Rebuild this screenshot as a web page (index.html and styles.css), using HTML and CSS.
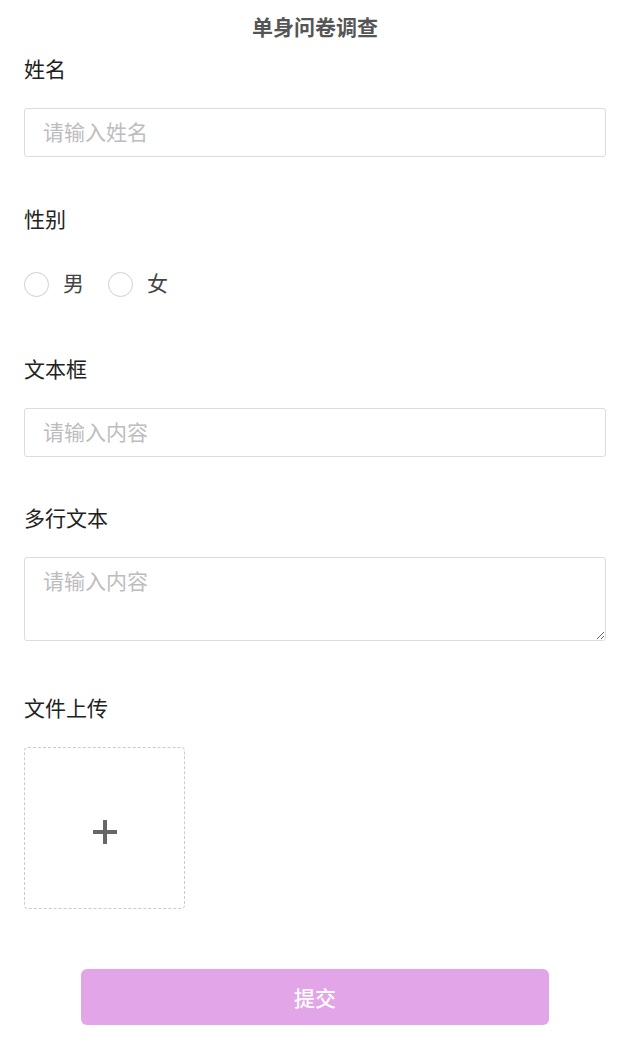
FILE: index.html
```html
<!DOCTYPE html>
<html lang="zh-CN">
<head>
<meta charset="utf-8">
<title>单身问卷调查</title>
<link rel="stylesheet" href="styles.css">
</head>
<body>
<div class="page">
  <h1 class="title">单身问卷调查</h1>
  <form class="form">
    <div class="field">
      <div class="label">姓名</div>
      <input class="input" type="text" placeholder="请输入姓名">
    </div>
    <div class="field field-radio">
      <div class="label">性别</div>
      <div class="radios">
        <label class="radio"><span class="circle"></span><span class="radio-text">男</span></label>
        <label class="radio"><span class="circle"></span><span class="radio-text">女</span></label>
      </div>
    </div>
    <div class="field field-text">
      <div class="label">文本框</div>
      <input class="input" type="text" placeholder="请输入内容">
    </div>
    <div class="field field-area">
      <div class="label">多行文本</div>
      <textarea class="textarea" placeholder="请输入内容"></textarea>
    </div>
    <div class="field field-upload">
      <div class="label">文件上传</div>
      <div class="upload"><span class="plus"></span></div>
    </div>
    <div class="actions">
      <button type="button" class="submit">提交</button>
    </div>
  </form>
</div>
</body>
</html>
```
FILE: styles.css
```css
* { box-sizing: border-box; }
html, body { margin: 0; padding: 0; background: #fff; }
body {
  font-family: "Noto Sans CJK SC", "Noto Sans", sans-serif;
  color: #222;
}
.page { padding: 0 24px; }
.title {
  margin: 0;
  height: 55px;
  line-height: 53px;
  text-align: center;
  font-size: 21px;
  font-weight: 700;
  color: #555;
}
.field { margin-bottom: 48px; }
.field-radio { margin-bottom: 45px; }
.field-text { margin-bottom: 47px; }
.field-area { margin-bottom: 53px; }
.field-upload { margin-bottom: 60px; }
.label {
  height: 30px;
  line-height: 26px;
  font-size: 21px;
  color: #222;
  margin-bottom: 23px;
}
.input, .textarea {
  display: block;
  width: 100%;
  border: 1px solid #dcdcdc;
  border-radius: 3px;
  font-family: inherit;
  font-size: 21px;
  color: #333;
  outline: none;
  background: #fff;
}
.input { height: 49px; padding: 0 18px 4px; }
.textarea { height: 84px; padding: 7px 18px; resize: vertical; line-height: 30px; }
.input::placeholder, .textarea::placeholder { color: #bdbdbd; }
.radios { display: flex; height: 52px; align-items: center; gap: 24px; }
.radio { display: flex; align-items: center; gap: 14px; font-size: 21px; color: #444; }
.circle {
  width: 25px; height: 25px;
  border: 1px solid #cfcfcf;
  border-radius: 50%;
  background: #fff;
}
.radio-text { line-height: 26px; padding-bottom: 4px; }
.upload {
  width: 161px; height: 162px;
  border: 1px dashed #cccccc;
  border-radius: 4px;
  display: flex; align-items: center; justify-content: center;
}
.plus { position: relative; width: 24px; height: 24px; margin-top: 8px; }
.plus::before, .plus::after {
  content: ""; position: absolute; background: #666;
}
.plus::before { left: 0; right: 0; top: 10px; height: 4px; }
.plus::after { top: 0; bottom: 0; left: 10px; width: 4px; }
.actions { display: flex; justify-content: center; }
.submit {
  width: 468px; height: 56px;
  border: none; border-radius: 6px;
  background: #e2a5e8;
  color: #fff;
  font-family: inherit;
  font-size: 21px;
  font-weight: 500;
  line-height: 52px;
}
```
